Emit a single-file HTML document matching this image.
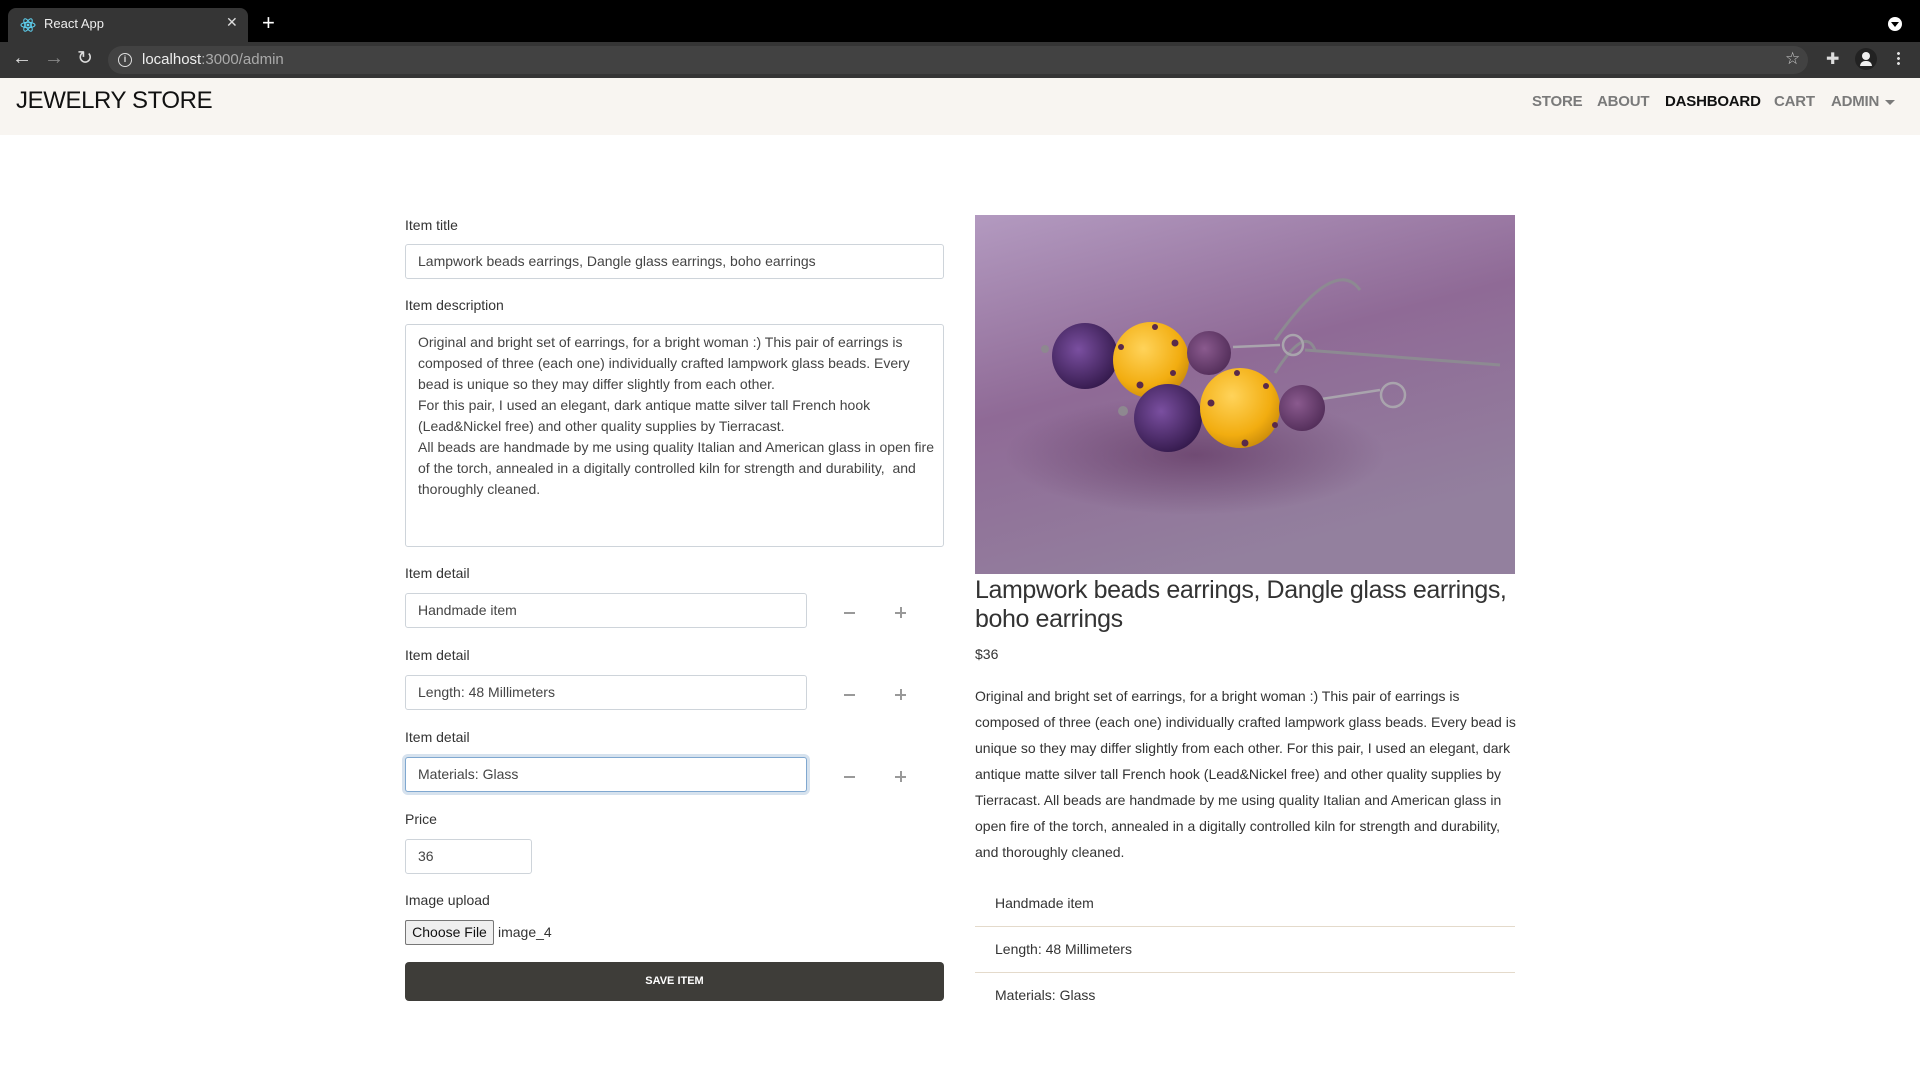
<!DOCTYPE html>
<html><head><meta charset="utf-8"><style>
*{box-sizing:border-box;margin:0;padding:0}
body{width:1920px;height:1080px;overflow:hidden;background:#fff;font-family:"Liberation Sans",sans-serif;color:#212529;position:relative}
.a{position:absolute}
.lbl{position:absolute;left:405px;font-size:14px;color:#333;line-height:16px}
.inp{position:absolute;left:405px;border:1px solid #ced4da;border-radius:3px;background:#fff;font-size:14px;color:#444;padding-left:12px;line-height:32px;height:35px;white-space:nowrap}
.nav{position:absolute;top:93px;font-size:15px;color:#7a7a7a;font-weight:bold;letter-spacing:-0.2px}
.pl{position:absolute;left:975px;font-size:14px;color:#333;white-space:nowrap;line-height:26px}
.li{position:absolute;left:995px;font-size:14px;color:#333}
.sep{position:absolute;left:975px;width:540px;height:1px;background:#e4dacb}
</style></head><body>
<div class="a" style="left:0;top:0;width:1920px;height:42px;background:#000"></div>
<div class="a" style="left:8px;top:8px;width:240px;height:36px;background:#353535;border-radius:8px 8px 0 0"></div>
<svg class="a" style="left:20px;top:17px" width="16" height="16" viewBox="0 0 16 16"><g fill="none" stroke="#5fd3f3" stroke-width="1"><ellipse cx="8" cy="8" rx="7" ry="2.7"/><ellipse cx="8" cy="8" rx="7" ry="2.7" transform="rotate(60 8 8)"/><ellipse cx="8" cy="8" rx="7" ry="2.7" transform="rotate(120 8 8)"/></g><circle cx="8" cy="8" r="1.4" fill="#5fd3f3"/></svg>
<div class="a" style="left:44px;top:16px;font-size:13px;color:#eee">React App</div>
<div class="a" style="left:226px;top:14px;font-size:14px;color:#ddd">✕</div>
<div class="a" style="left:262px;top:10px;font-size:22px;color:#fff">+</div>
<div class="a" style="left:1888px;top:17px;width:14px;height:14px;border-radius:50%;background:#fff"></div>
<div class="a" style="left:1891px;top:22px;width:0;height:0;border-left:4px solid transparent;border-right:4px solid transparent;border-top:5px solid #000"></div>
<div class="a" style="left:0;top:42px;width:1920px;height:36px;background:#353535"></div>
<div class="a" style="left:12px;top:47px;font-size:20px;color:#ddd">←</div>
<div class="a" style="left:44px;top:47px;font-size:20px;color:#888">→</div>
<div class="a" style="left:77px;top:47px;font-size:19px;color:#ddd">↻</div>
<div class="a" style="left:108px;top:46px;width:1700px;height:28px;background:#424242;border-radius:14px"></div>
<div class="a" style="left:118px;top:53px;width:14px;height:14px;border:1.5px solid #ddd;border-radius:50%;font-size:9px;color:#ddd;text-align:center;line-height:11px;font-weight:bold">i</div>
<div class="a" style="left:142px;top:51px;font-size:15px;color:#eee">localhost<span style="color:#aaa">:3000/admin</span></div>
<div class="a" style="left:1785px;top:49px;font-size:17px;color:#ccc">☆</div>
<div class="a" style="left:1826px;top:49px;font-size:16px;color:#ddd">✚</div>
<div class="a" style="left:1855px;top:48px;width:22px;height:22px;border-radius:50%;background:#222"></div>
<div class="a" style="left:1862px;top:52px;width:8px;height:8px;border-radius:50%;background:#eee"></div>
<div class="a" style="left:1860px;top:61px;width:12px;height:5px;border-radius:5px 5px 0 0;background:#eee"></div>
<div class="a" style="left:1897px;top:51px;width:3px;height:14px;background:radial-gradient(circle,#ddd 1.3px,transparent 1.6px) 0 0/3px 5px"></div>
<div class="a" style="left:0;top:78px;width:1920px;height:57px;background:#f8f5f1"></div>
<div class="a" style="left:16px;top:87px;font-size:24px;color:#111;letter-spacing:-0.4px">JEWELRY STORE</div>
<div class="nav" style="left:1532px">STORE</div>
<div class="nav" style="left:1597px">ABOUT</div>
<div class="nav" style="left:1665px;color:#111">DASHBOARD</div>
<div class="nav" style="left:1774px">CART</div>
<div class="nav" style="left:1831px">ADMIN</div>
<div class="a" style="left:1885px;top:100px;border-left:5px solid transparent;border-right:5px solid transparent;border-top:5px solid #7a7a7a"></div>
<div class="lbl" style="top:217px">Item title</div>
<div class="inp" style="top:244px;width:539px">Lampwork beads earrings, Dangle glass earrings, boho earrings</div>
<div class="lbl" style="top:297px">Item description</div>
<div class="inp" style="top:324px;width:539px;height:223px;line-height:21px;padding-top:7px">Original and bright set of earrings, for a bright woman :) This pair of earrings is<br>composed of three (each one) individually crafted lampwork glass beads. Every<br>bead is unique so they may differ slightly from each other.<br>For this pair, I used an elegant, dark antique matte silver tall French hook<br>(Lead&amp;Nickel free) and other quality supplies by Tierracast.<br>All beads are handmade by me using quality Italian and American glass in open fire<br>of the torch, annealed in a digitally controlled kiln for strength and durability,&nbsp; and<br>thoroughly cleaned.</div>
<div class="lbl" style="top:565px">Item detail</div>
<div class="inp" style="top:593px;width:402px">Handmade item</div>
<div class="lbl" style="top:647px">Item detail</div>
<div class="inp" style="top:675px;width:402px">Length: 48 Millimeters</div>
<div class="lbl" style="top:729px">Item detail</div>
<div class="inp" style="top:757px;width:402px;border-color:#80a8d0;box-shadow:0 0 0 3px #d6e2ee">Materials: Glass</div>
<div class="a" style="left:844px;top:612px;width:11px;height:1.5px;background:#999"></div>
<div class="a" style="left:895px;top:612px;width:11px;height:1.5px;background:#999"></div><div class="a" style="left:900px;top:607px;width:1.5px;height:11px;background:#999"></div>
<div class="a" style="left:844px;top:694px;width:11px;height:1.5px;background:#999"></div>
<div class="a" style="left:895px;top:694px;width:11px;height:1.5px;background:#999"></div><div class="a" style="left:900px;top:689px;width:1.5px;height:11px;background:#999"></div>
<div class="a" style="left:844px;top:776px;width:11px;height:1.5px;background:#999"></div>
<div class="a" style="left:895px;top:776px;width:11px;height:1.5px;background:#999"></div><div class="a" style="left:900px;top:771px;width:1.5px;height:11px;background:#999"></div>
<div class="lbl" style="top:811px">Price</div>
<div class="inp" style="top:839px;width:127px">36</div>
<div class="lbl" style="top:892px">Image upload</div>
<div class="a" style="left:405px;top:920px;width:89px;height:25px;border:1px solid #767676;border-radius:2px;background:#efefef;font-size:14px;color:#111;text-align:center;line-height:23px">Choose File</div>
<div class="a" style="left:498px;top:924px;font-size:14px;color:#333">image_4</div>
<div class="a" style="left:405px;top:962px;width:539px;height:39px;background:#3e3d39;border-radius:4px;color:#fff;font-size:11px;font-weight:bold;text-align:center;line-height:39px">SAVE ITEM</div>
<svg class="a" style="left:975px;top:215px" width="540" height="359" viewBox="0 0 540 359">
<defs>
<linearGradient id="bg" x1="0" y1="0" x2="0.4" y2="1"><stop offset="0" stop-color="#b39ac0"/><stop offset="0.5" stop-color="#8f6a96"/><stop offset="1" stop-color="#93809e"/></linearGradient>
<radialGradient id="y" cx="0.4" cy="0.35" r="0.7"><stop offset="0" stop-color="#ffd35a"/><stop offset="0.7" stop-color="#f2ad10"/><stop offset="1" stop-color="#c98a0a"/></radialGradient>
<radialGradient id="p" cx="0.4" cy="0.4" r="0.7"><stop offset="0" stop-color="#7a4fa0"/><stop offset="1" stop-color="#2e1545"/></radialGradient>
<radialGradient id="m" cx="0.4" cy="0.4" r="0.7"><stop offset="0" stop-color="#8a5a8e"/><stop offset="1" stop-color="#4e2a55"/></radialGradient>
<radialGradient id="sh" cx="0.5" cy="0.5" r="0.5"><stop offset="0" stop-color="#5a2f5a" stop-opacity="0.6"/><stop offset="1" stop-color="#5a2f5a" stop-opacity="0"/></radialGradient>
</defs>
<rect width="540" height="359" fill="url(#bg)"/>
<ellipse cx="220" cy="240" rx="190" ry="60" fill="url(#sh)"/>
<g fill="none" stroke="#8d8a92" stroke-width="3"><path d="M300 125 Q360 40 385 75"/><path d="M330 135 L525 150"/><path d="M300 158 Q330 110 340 135"/></g>
<g fill="none" stroke="#a9a4ad" stroke-width="2.5"><circle cx="318" cy="130" r="10"/><circle cx="418" cy="180" r="12"/><path d="M340 185 L405 175"/><path d="M258 132 L305 130"/></g>
<circle cx="110" cy="141" r="33" fill="url(#p)"/>
<circle cx="176" cy="145" r="38" fill="url(#y)"/>
<circle cx="234" cy="138" r="22" fill="url(#m)"/>
<circle cx="193" cy="203" r="34" fill="url(#p)"/>
<circle cx="265" cy="193" r="40" fill="url(#y)"/>
<circle cx="327" cy="193" r="23" fill="url(#m)"/>
<g fill="#5a2a4a"><circle cx="180" cy="112" r="3"/><circle cx="200" cy="128" r="3.5"/><circle cx="146" cy="132" r="3"/><circle cx="165" cy="170" r="3.5"/><circle cx="198" cy="158" r="3"/><circle cx="262" cy="158" r="3"/><circle cx="236" cy="188" r="3.5"/><circle cx="291" cy="171" r="3"/><circle cx="270" cy="228" r="3.5"/><circle cx="300" cy="210" r="3"/></g>
<g fill="#8e8890"><circle cx="148" cy="196" r="5"/><circle cx="70" cy="134" r="4"/></g>
</svg>
<div class="a" style="left:975px;top:576px;font-size:25px;color:#333;line-height:29px;white-space:nowrap;letter-spacing:-0.4px">Lampwork beads earrings, Dangle glass earrings,<br>boho earrings</div>
<div class="a" style="left:975px;top:646px;font-size:14px;color:#333">$36</div>
<div class="pl" style="top:683px">Original and bright set of earrings, for a bright woman :) This pair of earrings is<br>composed of three (each one) individually crafted lampwork glass beads. Every bead is<br>unique so they may differ slightly from each other. For this pair, I used an elegant, dark<br>antique matte silver tall French hook (Lead&amp;Nickel free) and other quality supplies by<br>Tierracast. All beads are handmade by me using quality Italian and American glass in<br>open fire of the torch, annealed in a digitally controlled kiln for strength and durability,<br>and thoroughly cleaned.</div>
<div class="li" style="top:895px">Handmade item</div>
<div class="sep" style="top:926px"></div>
<div class="li" style="top:941px">Length: 48 Millimeters</div>
<div class="sep" style="top:972px"></div>
<div class="li" style="top:987px">Materials: Glass</div>
</body></html>
